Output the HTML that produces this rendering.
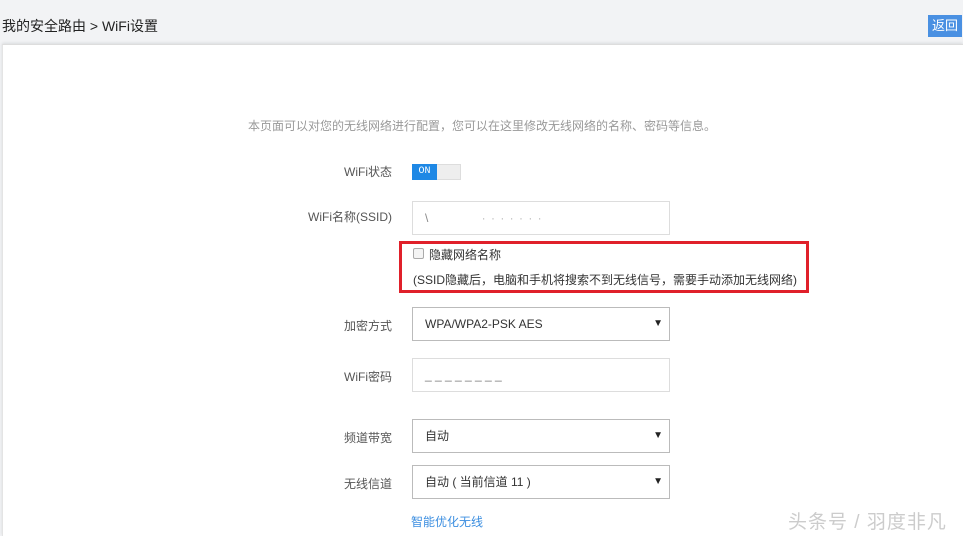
<!DOCTYPE html>
<html><head><meta charset="utf-8"><style>
*{margin:0;padding:0;box-sizing:border-box}
body{width:963px;height:536px;overflow:hidden;background:#f2f3f5;font-family:"Liberation Sans","Microsoft YaHei","Noto Sans CJK SC",sans-serif;position:relative;color:#333}
.a{position:absolute}
.title{left:2px;top:16px;font-size:14px;color:#222}
.back{left:928px;top:15px;width:34px;height:22px;background:#4a90e2;color:#fff;font-size:13px;line-height:22px;text-align:center}
.panel{left:2px;top:44px;width:961px;height:492px;background:#fff;border-top:1px solid #ddd;border-left:1px solid #e4e4e4;box-shadow:0 -1px 3px rgba(0,0,0,.1)}
.lbl{font-size:12px;color:#555;text-align:right;width:150px;left:242px}
.inp{left:412px;width:258px;height:34px;border:1px solid #ddd;background:#fff;font-size:12px;color:#333;padding-left:12px;line-height:32px}
.sel{border-color:#bbb}
.sel:after{content:"▼";position:absolute;right:6px;top:0;font-size:10px;color:#222}
</style></head><body>
<div class="a title">我的安全路由 &gt; WiFi设置</div>
<div class="a back">返回</div>
<div class="a panel"></div>
<div class="a" style="left:248px;top:117px;font-size:12px;color:#999">本页面可以对您的无线网络进行配置，您可以在这里修改无线网络的名称、密码等信息。</div>

<div class="a lbl" style="top:163px">WiFi状态</div>
<div class="a" style="left:412px;top:164px;width:49px;height:16px;background:#eee;border:1px solid #ddd"></div>
<div class="a" style="left:412px;top:164px;width:25px;height:16px;background:#1e88e5;color:#fff;font-family:'Liberation Mono',monospace;font-size:10px;line-height:16px;text-align:center">ON</div>

<div class="a lbl" style="top:208px">WiFi名称(SSID)</div>
<div class="a inp" style="top:201px;color:#888">\ <span style="letter-spacing:1px;margin-left:50px;color:#bbb">· · · · · · ·</span></div>

<div class="a" style="left:399px;top:241px;width:410px;height:52px;border:3px solid #e0202a"></div>
<div class="a" style="left:413px;top:248px;width:11px;height:11px;border:1px solid #aaa;border-radius:2px;background:#f4f4f4"></div>
<div class="a" style="left:429px;top:246px;font-size:12px;color:#333">隐藏网络名称</div>
<div class="a" style="left:413px;top:271px;font-size:12px;color:#333">(SSID隐藏后，电脑和手机将搜索不到无线信号，需要手动添加无线网络)</div>

<div class="a lbl" style="top:317px">加密方式</div>
<div class="a inp sel" style="top:307px">WPA/WPA2-PSK AES</div>

<div class="a lbl" style="top:368px">WiFi密码</div>
<div class="a inp" style="top:358px;color:#777">_ _ _ _ _ _ _ _</div>

<div class="a lbl" style="top:429px">频道带宽</div>
<div class="a inp sel" style="top:419px">自动</div>

<div class="a lbl" style="top:475px">无线信道</div>
<div class="a inp sel" style="top:465px">自动 ( 当前信道 11 )</div>

<div class="a" style="left:411px;top:513px;font-size:12px;color:#3b8ee0">智能优化无线</div>
<div class="a" style="left:788px;top:507px;font-size:19px;color:#ccc;letter-spacing:1px">头条号 / 羽度非凡</div>
</body></html>
